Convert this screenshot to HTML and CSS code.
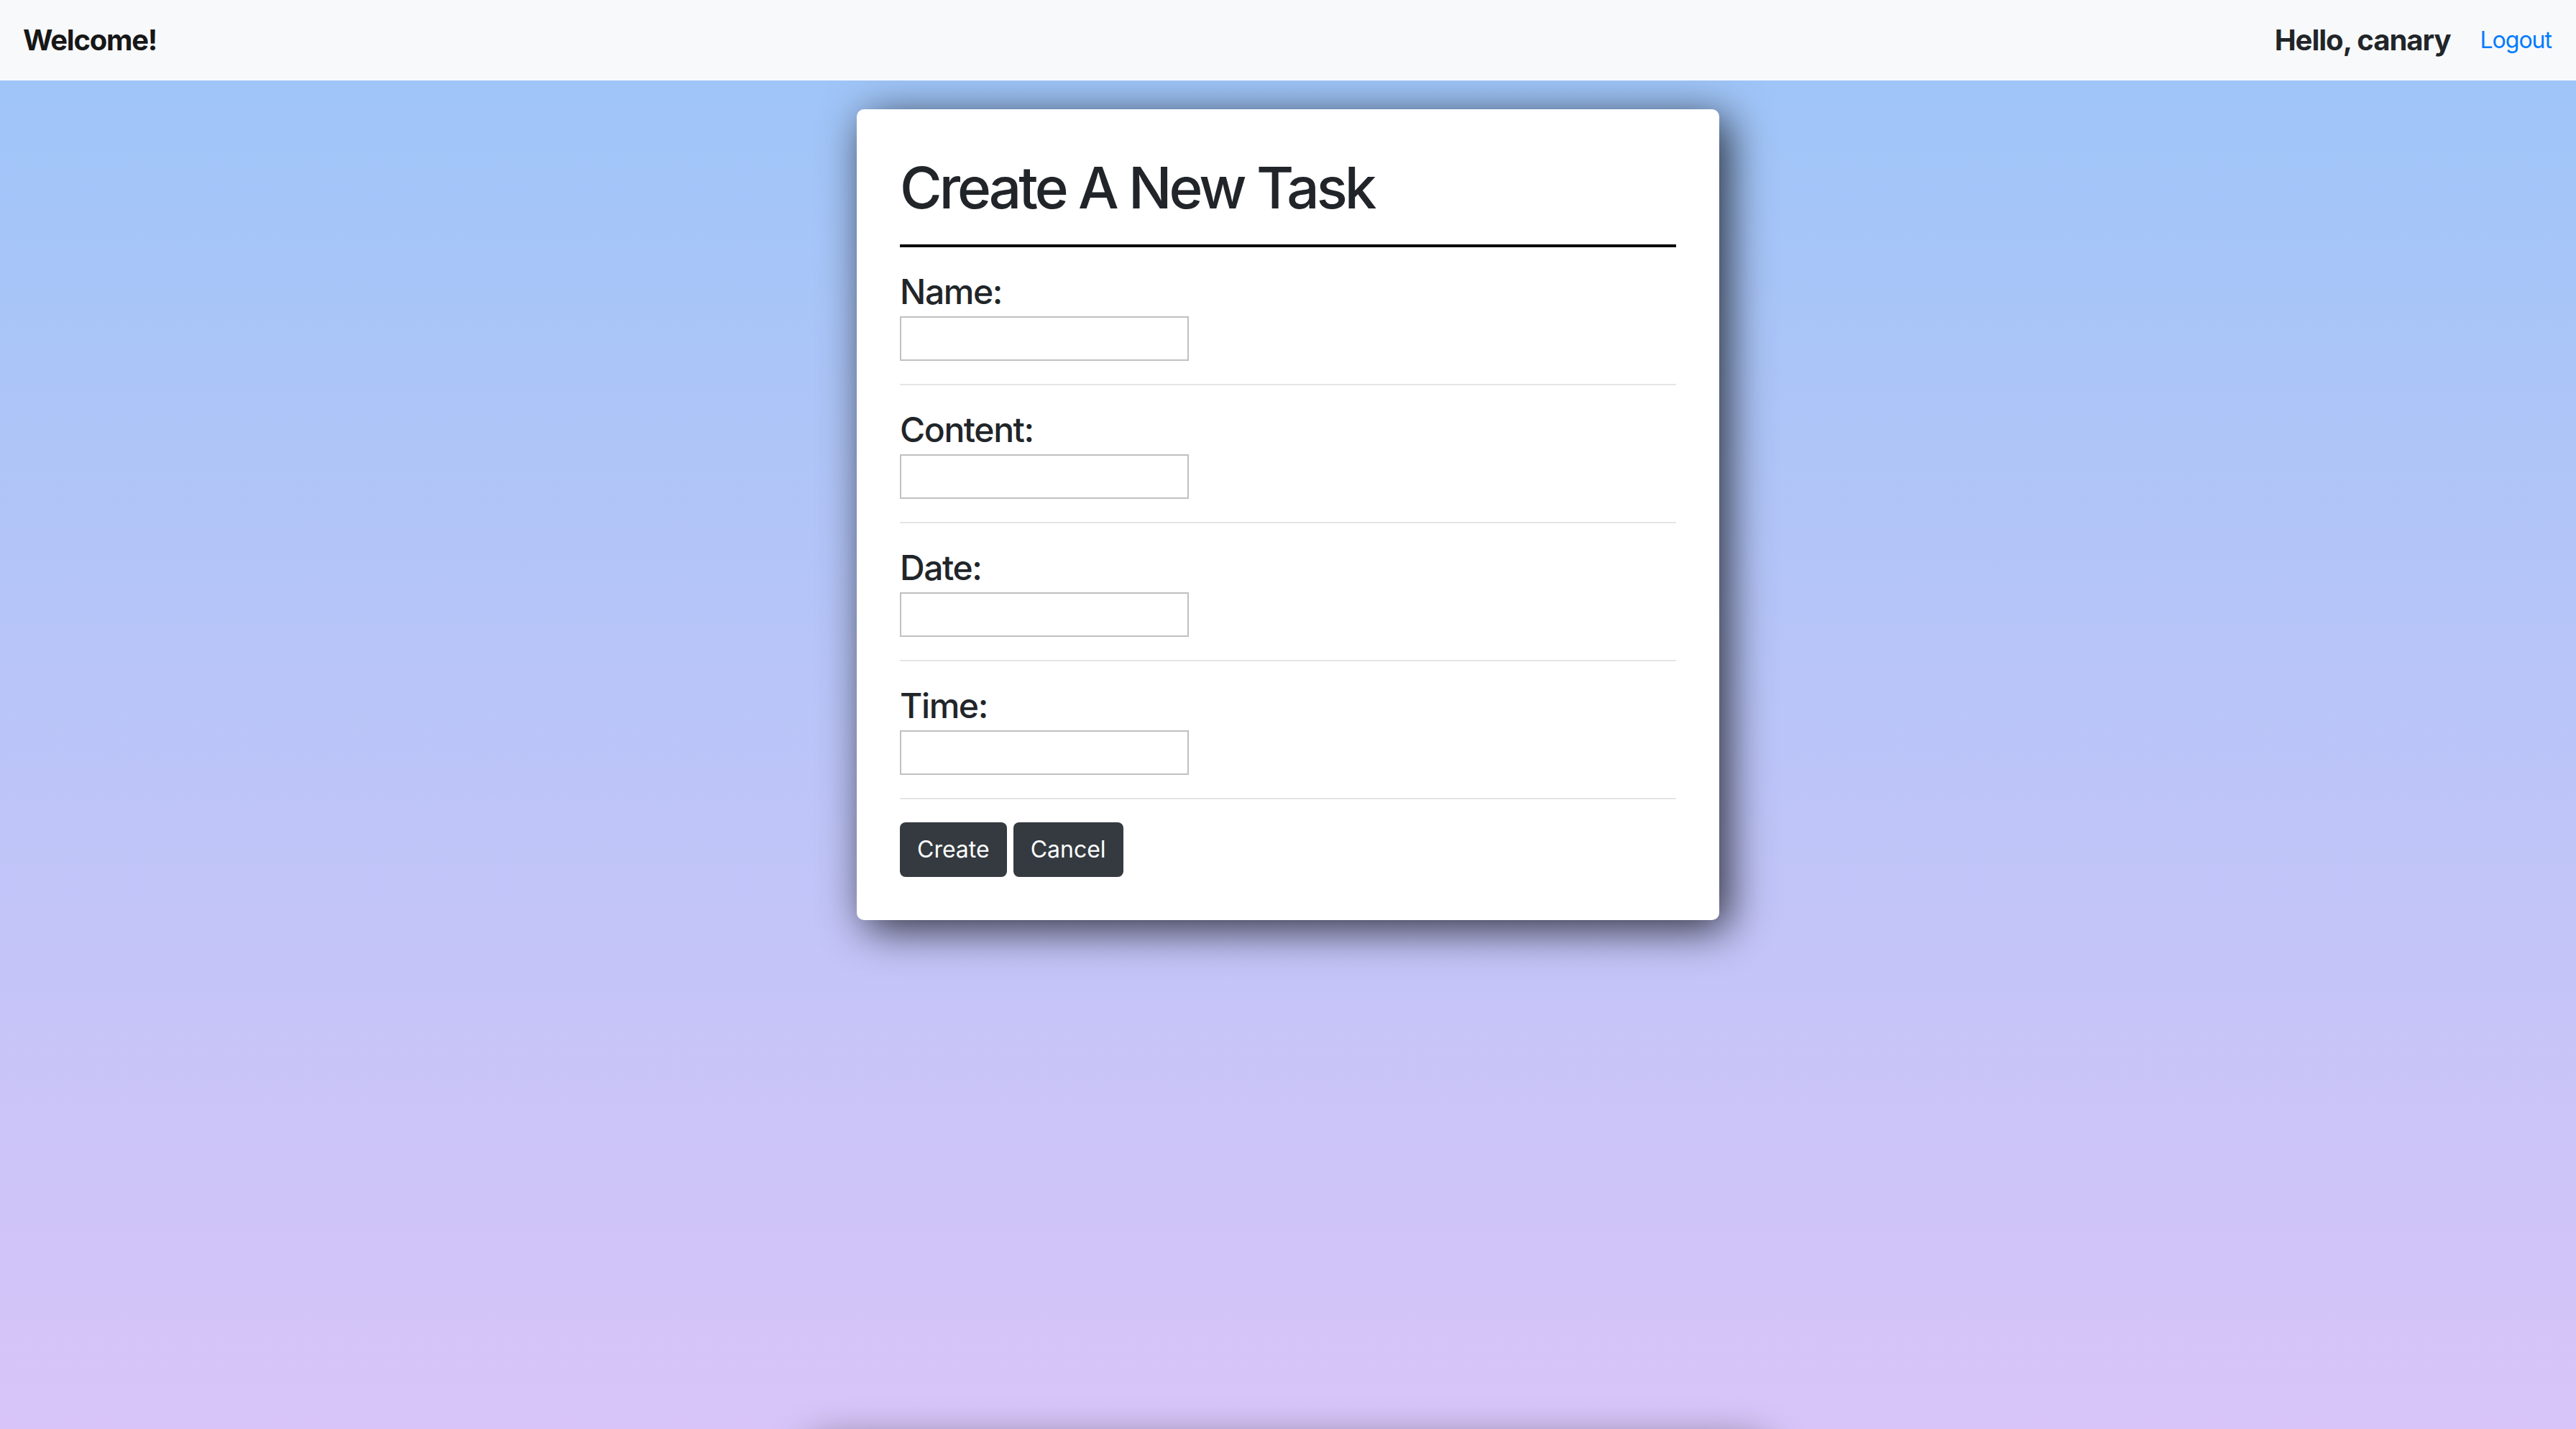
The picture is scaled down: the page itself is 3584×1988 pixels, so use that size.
FILE: index.html
```html
<!DOCTYPE html>
<html lang="en">
<head>
<meta charset="utf-8">
<title>Create A New Task</title>
<link rel="stylesheet" href="styles.css">
</head>
<body>
<nav class="navbar">
  <span class="brand">Welcome!</span>
  <div class="nav-right">
    <span class="hello">Hello, canary</span>
    <a class="logout" href="#">Logout</a>
  </div>
</nav>
<main class="stage">
  <form class="card">
    <h1 class="title">Create A New Task</h1>
    <hr class="rule">
    <div class="field">
      <label class="label">Name:</label>
      <input class="input" type="text">
    </div>
    <div class="field">
      <label class="label">Content:</label>
      <input class="input" type="text">
    </div>
    <div class="field">
      <label class="label">Date:</label>
      <input class="input" type="text">
    </div>
    <div class="field">
      <label class="label">Time:</label>
      <input class="input" type="text">
    </div>
    <div class="actions">
      <button class="btn" type="button">Create</button>
      <button class="btn" type="button">Cancel</button>
    </div>
  </form>
</main>
</body>
</html>
```
FILE: styles.css
```css
* { box-sizing: border-box; }
html, body {
  margin: 0;
  padding: 0;
}
body {
  font-family: Inter, "Liberation Sans", Arial, sans-serif;
  color: #212529;
  background: #d8c4f8;
  overflow: hidden;
}
.navbar {
  height: 112px;
  background: #f8f9fa;
  display: flex;
  align-items: center;
  justify-content: space-between;
  padding: 0 34px 0 32px;
}
.brand {
  font-size: 40px;
  font-weight: 700;
  line-height: 112px;
  letter-spacing: -1.25px;
  color: #171717;
}
.nav-right {
  display: flex;
  align-items: center;
  gap: 41px;
}
.hello {
  font-size: 40px;
  font-weight: 700;
  line-height: 112px;
  letter-spacing: -1px;
  color: #212529;
}
.logout {
  font-size: 32px;
  line-height: 112px;
  letter-spacing: -1px;
  color: #007bff;
  text-decoration: none;
}
.stage {
  position: relative;
  overflow: hidden;
  height: calc(100vh - 112px);
  background: linear-gradient(to bottom, #9fc5f8 0%, #d8c4f8 100%);
  display: flex;
  flex-direction: column;
  align-items: center;
  padding-top: 40px;
}
.stage::after {
  content: "";
  position: absolute;
  left: 50%;
  top: calc(100% + 16px);
  width: 1320px;
  height: 400px;
  margin-left: -660px;
  border-radius: 10px;
  box-shadow: 0 12px 60px rgba(0, 0, 0, 0.75);
}
.card {
  width: 1200px;
  background: #ffffff;
  border-radius: 10px;
  padding: 61px 60px 60px;
  box-shadow: 12px 12px 60px rgba(0, 0, 0, 0.78);
}
.title {
  margin: 0 0 31px;
  font-size: 80px;
  line-height: 96px;
  font-weight: 500;
  letter-spacing: -4px;
  color: #212529;
}
.rule {
  margin: 0;
  border: 0;
  height: 4px;
  background: #000000;
}
.field {
  display: flex;
  flex-direction: column;
  align-items: flex-start;
  padding: 33px 0 32px;
  border-bottom: 2px solid #e5e5e5;
}
.label {
  font-size: 48px;
  line-height: 58px;
  font-weight: 500;
  letter-spacing: -1.4px;
  color: #212529;
  margin-bottom: 5px;
}
.input {
  width: 402px;
  height: 62px;
  margin: 0;
  border: 2px solid #c0c0c0;
  border-radius: 0;
  background: #ffffff;
  font-size: 26px;
  padding: 0 6px;
}
.actions {
  display: flex;
  gap: 9px;
  margin-top: 32px;
}
.btn {
  height: 76px;
  padding: 0 24px;
  border: 0;
  border-radius: 8px;
  background: #343a40;
  color: #ffffff;
  font-family: Inter, "Liberation Sans", Arial, sans-serif;
  font-size: 32px;
  line-height: 76px;
}
```
